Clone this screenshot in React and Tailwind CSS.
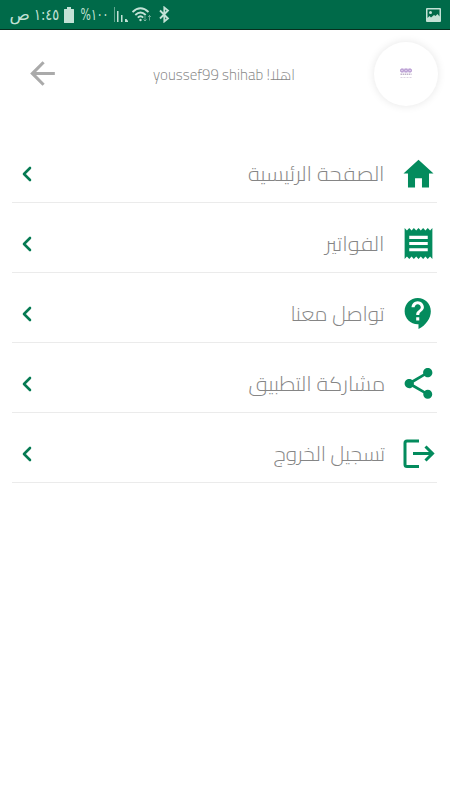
import React, { useLayoutEffect, useRef, useState } from "react";
import { MdArrowBack, MdReceipt, MdContactSupport, MdShare } from "react-icons/md";

const menuItems = [
  { title: "الصفحة الرئيسية", width: 137, icon: HomeIcon },
  { title: "الفواتير", width: 60, icon: MdReceipt },
  { title: "تواصل معنا", width: 94, icon: MdContactSupport },
  { title: "مشاركة التطبيق", width: 137, icon: MdShare },
  { title: "تسجيل الخروج", width: 112, icon: LogoutIcon },
];

// Squeezes a single line of text into the given width
function FitText({ width, className, children }) {
  const ref = useRef(null);
  const [scale, setScale] = useState(1);

  useLayoutEffect(() => {
    setScale(width / ref.current.offsetWidth);
  }, [width]);

  return (
    <span className="flex shrink-0 justify-center" style={{ width }}>
      <span
        ref={ref}
        className={`inline-block shrink-0 origin-center whitespace-nowrap ${className}`}
        style={{ transform: `scaleX(${scale})` }}
      >
        {children}
      </span>
    </span>
  );
}

function HomeIcon({ className }) {
  return (
    <svg viewBox="0 0 512 512" fill="currentColor" className={className}>
      <path d="M208 448V320h96v128h97.6V256H464L256 64 48 256h62.4v192z" />
    </svg>
  );
}

function LogoutIcon({ className }) {
  return (
    <svg viewBox="0 0 37 37" fill="none" stroke="currentColor" strokeWidth="3" className={className}>
      <path d="M19 6H7a2 2 0 0 0-2 2v21.500a2 2 0 0 0 2 2H19" />
      <path d="M13 18.500H33M25.500 11.500L32.500 18.500l-7 7" />
    </svg>
  );
}

function StatusBar() {
  return (
    <div dir="ltr" className="flex h-[30px] items-center border-b border-[#06301f] bg-[#006a49] pl-[10px] pr-[9px] text-[#c3e2d6]">
      <div dir="rtl" className="flex w-[49px] items-center justify-between font-['DejaVu_Sans',sans-serif] text-[16px]">
        <FitText width={25} className="">١:٤٥</FitText>
        <FitText width={20} className="">ص</FitText>
      </div>
      <svg viewBox="0 0 10 16" fill="currentColor" className="ml-[5px] h-4 w-[10px]">
        <path d="M3 0h4v2h2.500q.5 0 .5.500v13q0 .5-.5.500h-9q-.5 0-.5-.5v-13q0-.5.500-.5H3z" />
      </svg>
      <div className="ml-[6px] flex items-center font-['DejaVu_Sans',sans-serif] text-[16px]">
        <FitText width={28} className="">%١٠٠</FitText>
      </div>
      <svg viewBox="0 0 15 15" fill="currentColor" className="ml-[6px] h-[15px] w-[15px]">
        <path d="M0 0h1v15H0z" opacity="0.5" />
        <path d="M3 4h1.500v11H3zM7 8h1.500v7H7zM11 12h1.500l1.500 2v1h-3z" />
      </svg>
      <svg viewBox="0 0 21 16" fill="none" stroke="currentColor" strokeWidth="1.900" className="ml-[3px] h-4 w-[21px]">
        <path d="M.5 5Q8.500-2.500 16.500 5M3.300 8Q8.500 3 13.700 8M5.800 10.600Q8.500 8 11.200 10.600" />
        <circle cx="8.500" cy="13" r="1.200" fill="currentColor" stroke="none" />
        <path d="M13 9v5M11.500 12.500l1.500 1.500 1.500-1.500M17.500 13.500v-5M16 10l1.500-1.500L19 10" strokeWidth="1" opacity="0.5" />
      </svg>
      <svg viewBox="0 0 11 17" fill="none" stroke="currentColor" strokeWidth="1.800" className="ml-[6px] h-[17px] w-[11px]">
        <path d="M1 4.500l8 8-3.700 3V1.500l3.700 3-8 8" />
      </svg>
      <svg viewBox="0 0 15 14" className="ml-auto h-[14px] w-[15px]">
        <rect width="15" height="14" rx="1" fill="currentColor" />
        <path d="M1.500 1.500h12v7l-2-2.500-2 2-1.500-1-3 2.500-1.500-1.500-2 2z" fill="#006a49" />
        <circle cx="4.500" cy="4.500" r="1.500" fill="currentColor" />
      </svg>
    </div>
  );
}

function Header() {
  return (
    <header className="flex h-[88px] items-center pl-6 pr-3">
      <div className="flex h-16 w-16 items-center justify-center rounded-full bg-white shadow-[0_0_9px_rgba(0,0,0,0.100)]">
        <svg viewBox="0 0 14 12" className="h-3 w-[14px]" fill="none">
          <rect x="1" y=".5" width="12" height="4" rx="2" fill="#d9c8e8" />
          <g stroke="#b497cf" strokeWidth="1">
            <circle cx="3" cy="2.500" r="1.500" />
            <circle cx="7" cy="2.500" r="1.500" />
            <circle cx="11" cy="2.500" r="1.500" />
          </g>
          <path d="M1.500 6.300h11" stroke="#bfb3c8" strokeWidth="1.500" strokeDasharray="1.500 .6" />
          <path d="M1.500 9.500h11" stroke="#ddd2e2" strokeDasharray="2 1" />
        </svg>
      </div>
      <div className="mr-[79px] w-[142px] pt-0.5 leading-5 text-[#858585]">
        <FitText width={142} className="font-['Cairo','DejaVu_Sans',sans-serif] text-[15px] font-light">اهلا! youssef99 shihab</FitText>
      </div>
      <MdArrowBack className="mr-auto mb-px h-[37px] w-[37px] text-[#aaaaaa]" />
    </header>
  );
}

function MenuItem({ item }) {
  const Icon = item.icon;

  return (
    <li className="flex h-[70px] items-center border-b border-[#ebebeb] pt-3">
      <Icon className="h-[37px] w-[37px] shrink-0 text-[#038b5d]" />
      <div className="mr-[15px] flex-1 text-[#858585]">
        <FitText width={item.width} className="font-['Cairo','DejaVu_Sans',sans-serif] text-[20px] leading-7 font-light">{item.title}</FitText>
      </div>
      <svg viewBox="0 0 10 16" fill="none" stroke="#067a53" strokeWidth="2.600" strokeLinecap="round" strokeLinejoin="round" className="ml-[10px] h-4 w-[10px]">
        <path d="M8 2L2 8l6 6" />
      </svg>
    </li>
  );
}

function App() {
  return (
    <div dir="rtl" className="h-[800px] w-[450px] overflow-hidden bg-white">
      <StatusBar />
      <Header />
      <ul className="mt-[15px] pl-3 pr-[13px]">
        {menuItems.map((item) => (
          <MenuItem key={item.title} item={item} />
        ))}
      </ul>
    </div>
  );
}

export default App;
